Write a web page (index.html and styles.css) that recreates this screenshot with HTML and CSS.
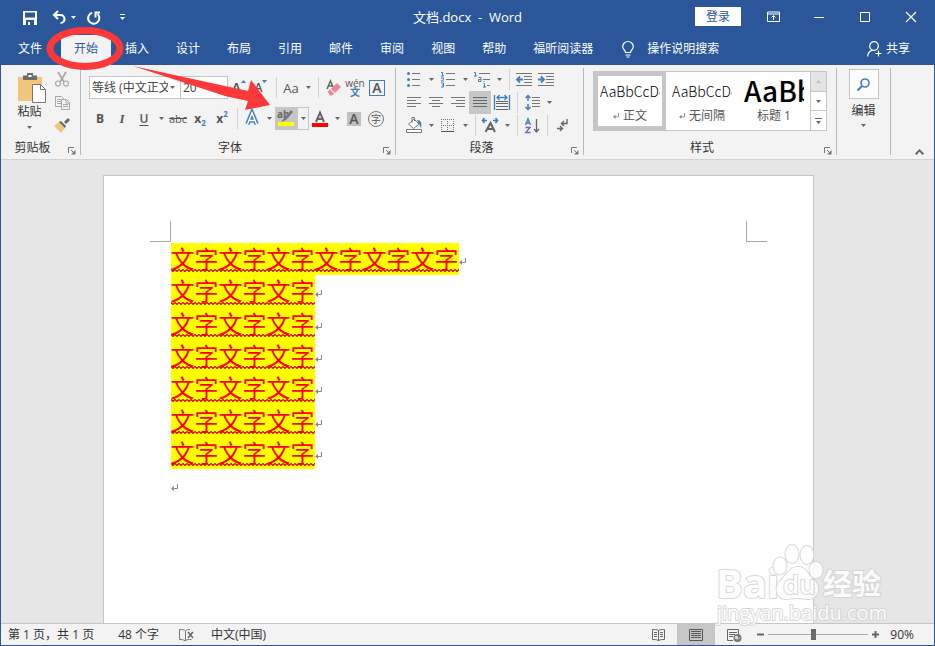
FILE: index.html
```html
<!DOCTYPE html>
<html lang="zh-CN">
<head>
<meta charset="utf-8">
<title>文档.docx - Word</title>
<link rel="stylesheet" href="styles.css">
</head>
<body>
<svg class="defs" aria-hidden="true">
  <symbol id="caret" viewBox="0 0 5 3"><path d="M0 0h5L2.500 3z" fill="currentColor"/></symbol>
  <symbol id="launcher" viewBox="0 0 8 8"><path d="M.5 6V.5H6M3 3l3 3" fill="none" stroke="#777"/><path d="M7.500 3v4.500H3z" fill="#777"/></symbol>
  <symbol id="mark" viewBox="0 0 7 7"><path d="M6.500 0v4.500H2" fill="none" stroke="#888"/><path d="M0 4.500L3 2v5z" fill="#888"/></symbol>
  <pattern id="zigzag" width="4" height="3" patternUnits="userSpaceOnUse"><path d="M-1 1.500L0 .5l2 2 2-2 1 1" fill="none" stroke="#d40000" stroke-width="1.200"/></pattern>
</svg>
<div class="window">
  <header class="titlebar">
    <div class="quick">
      <button class="q-save" aria-label="保存"><svg width="14" height="14" viewBox="0 0 14 14"><path fill-rule="evenodd" d="M0 0h14v14H0zM2 1.500v5h10v-5zM3 9v5h2v-3h2v3h4V9z" fill="#fff"/></svg></button>
      <button class="q-undo" aria-label="撤消"><svg width="15" height="13" viewBox="0 0 15 13"><path d="M2 4h6.500a4 4 0 0 1 0 8M6 0L2 4l4 4" fill="none" stroke="#fff" stroke-width="2.200"/></svg><svg class="caret"><use href="#caret"/></svg></button>
      <button class="q-redo" aria-label="重复"><svg width="14" height="14" viewBox="0 0 14 14"><path d="M5 1.800A5.600 5.600 0 1 0 10.500 3M8.500 6.500V1.500H13" fill="none" stroke="#fff" stroke-width="2"/></svg></button>
      <button class="q-more" aria-label="自定义快速访问工具栏"><svg width="5" height="7" viewBox="0 0 5 7"><path d="M0 0h5v1H0zM0 3h5L2.500 6z" fill="#fff"/></svg></button>
    </div>
    <h1 class="title">文档.docx&nbsp; -&nbsp; Word</h1>
    <div class="win-controls">
      <button class="login">登录</button>
      <button class="win" aria-label="功能区显示选项"><svg width="13" height="11" viewBox="0 0 13 11"><path d="M.5 1h12v9.500H.5zM.5 3h12M6.500 9V5M4.500 6.500l2-2 2 2" fill="none" stroke="#fff"/></svg></button>
      <button class="win" aria-label="最小化"><svg width="10" height="10" viewBox="0 0 10 10"><path d="M0 5.500h10" stroke="#fff"/></svg></button>
      <button class="win" aria-label="最大化"><svg width="10" height="10" viewBox="0 0 10 10"><path d="M.5.5h9v9h-9z" fill="none" stroke="#fff"/></svg></button>
      <button class="win" aria-label="关闭"><svg width="10" height="10" viewBox="0 0 10 10"><path d="M0 0l10 10M10 0L0 10" stroke="#fff" stroke-width="1.200"/></svg></button>
    </div>
  </header>
  <nav class="tabs">
    <button class="tab file">文件</button><button class="tab active">开始</button><button class="tab">插入</button><button class="tab">设计</button><button class="tab">布局</button><button class="tab">引用</button><button class="tab">邮件</button><button class="tab">审阅</button><button class="tab">视图</button><button class="tab">帮助</button><button class="tab">福昕阅读器</button>
    <button class="tell"><svg width="12" height="17" viewBox="0 0 12 17"><path d="M3.500 11.500C3.500 9 .7 8.500.7 5.500a5.300 5 0 0 1 10.600 0c0 3-2.800 3.500-2.800 6zM3.500 14h5M4.500 16h3" fill="none" stroke="#fff" stroke-width="1.200"/></svg>操作说明搜索</button>
    <button class="share"><svg width="15" height="16" viewBox="0 0 15 16"><circle cx="7" cy="5" r="4.300" fill="none" stroke="#fff" stroke-width="1.200"/><path d="M.6 15.500c.3-3.500 2-5.500 5-6.300M8.500 12.500h6M11.500 9.500v6" fill="none" stroke="#fff" stroke-width="1.200"/></svg>共享</button>
  </nav>

  <section class="ribbon">
    <div class="group clipboard">
      <div class="clip-body">
        <button class="paste"><svg width="28" height="30" viewBox="0 0 28 30"><path d="M0 4h24v24H0z" fill="#eec67c"/><path d="M5 2.500h4V0h6v2.500h4V7H5z" fill="#6d6d6d"/><path d="M10.500 2h3v2h-3z" fill="#fff"/><path d="M14.500 11.500h8l5 5v13h-13z" fill="#fff" stroke="#777"/><path d="M22.500 11.500v5h5" fill="none" stroke="#777"/></svg><span>粘贴</span><svg class="caret"><use href="#caret"/></svg></button>
        <div class="clip-side">
          <button class="btn" aria-label="剪切"><svg width="14" height="15" viewBox="0 0 14 15"><path d="M3 0l6 10M11 0L5 10" stroke="#a9a9a9" stroke-width="1.800"/><g fill="none" stroke="#a9a9a9" stroke-width="1.200"><circle cx="3" cy="11.500" r="2.500"/><circle cx="11" cy="11.500" r="2.500"/></g></svg></button>
          <button class="btn" aria-label="复制"><svg width="15" height="14" viewBox="0 0 15 14"><g fill="#f3f3f3" stroke="#a9a9a9"><path d="M.5.5h6l2 2v8h-8zM2 3.500h4M2 5.500h4M2 7.500h4"/><path d="M6.500 3.500h5l3 3v7h-8z"/><path d="M11 3.500v3.500h3M8 8.500h5M8 10.500h5"/></g></svg></button>
          <button class="btn" aria-label="格式刷"><svg width="16" height="15" viewBox="0 0 16 15"><path d="M0 8l5-4 6 6-4 5z" fill="#eec67c"/><path d="M5 4l2-1 5 5-1 2zM10 4l4-4 2 2-4 4z" fill="#666"/></svg></button>
        </div>
      </div>
      <footer class="group-foot"><span>剪贴板</span><button aria-label="剪贴板选项"><svg width="8" height="8"><use href="#launcher"/></svg></button></footer>
    </div>

    <div class="group font">
      <div class="font-body">
        <div class="row">
          <label class="combo face"><select aria-label="字体"><option>等线 (中文正文)</option></select><svg class="caret"><use href="#caret"/></svg></label>
          <label class="combo size"><select aria-label="字号"><option>20</option></select><svg class="caret"><use href="#caret"/></svg></label>
          <button class="btn grow" aria-label="增大字号">A<svg width="5" height="3" viewBox="0 0 5 3"><path d="M0 3h5L2.500 0z" fill="#3f7fb8"/></svg></button>
          <button class="btn shrink" aria-label="减小字号">A<svg width="5" height="3" viewBox="0 0 5 3"><path d="M0 0h5L2.500 3z" fill="#3f7fb8"/></svg></button>
          <i class="sep"></i>
          <button class="btn case" aria-label="更改大小写">Aa</button><button class="drop" aria-label="大小写选项"><svg class="caret"><use href="#caret"/></svg></button>
          <i class="sep"></i>
          <button class="btn" aria-label="清除格式"><svg width="15" height="16" viewBox="0 0 15 16"><path d="M1 9l3.500-8L7 7M2.500 6H6" fill="none" stroke="#666" stroke-width="1.500"/><path d="M5 9l6-6 4 4-6 6z" fill="#e58a9d"/><path d="M1.500 11.500L4 9.500l4 4L6 15.500H4z" fill="#e58a9d"/></svg></button>
          <button class="btn phonetic" aria-label="拼音指南"><span>wén</span><b>文</b></button>
          <button class="btn" aria-label="字符边框"><span class="boxed">A</span></button>
        </div>
        <div class="row">
          <button class="btn bold">B</button><button class="btn italic">I</button><button class="btn under">U</button><button class="drop" aria-label="下划线选项"><svg class="caret"><use href="#caret"/></svg></button>
          <button class="btn strike">abc</button><button class="btn script">x<sub>2</sub></button><button class="btn script">x<sup>2</sup></button>
          <i class="sep"></i>
          <button class="btn" aria-label="文本效果"><svg width="14" height="15" viewBox="0 0 14 15"><path d="M2.500 13L7 2l4.500 11M4.500 9.500h5" fill="none" stroke="#8fb4dc" stroke-width="5"/><path d="M2.500 13L7 2l4.500 11M4.500 9.500h5" fill="none" stroke="#3c78b4" stroke-width="3.600"/><path d="M2.500 13L7 2l4.500 11M4.500 9.500h5" fill="none" stroke="#fff" stroke-width="1.500"/></svg></button><button class="drop" aria-label="效果选项"><svg class="caret"><use href="#caret"/></svg></button>
          <button class="btn picked" aria-label="突出显示"><svg width="18" height="17" viewBox="0 0 18 17"><text x="0" y="8" class="ab">ab</text><path d="M14 0l2 2-7 8-2-2zM7 8l2 2-5 2z" fill="#777"/><path d="M1 12h16v4H1z" fill="#ff0"/></svg></button><button class="drop outlined" aria-label="突出显示颜色"><svg class="caret"><use href="#caret"/></svg></button>
          <button class="btn" aria-label="字体颜色"><svg width="16" height="16" viewBox="0 0 16 16"><path d="M4 11L8 1.500 12 11M5.500 8h5" fill="none" stroke="#666" stroke-width="2"/><path d="M0 12h16v4H0z" fill="#f00"/></svg></button><button class="drop" aria-label="字体颜色选项"><svg class="caret"><use href="#caret"/></svg></button>
          <button class="btn" aria-label="字符底纹"><span class="shaded">A</span></button>
          <button class="btn" aria-label="带圈字符"><span class="circled">字</span></button>
        </div>
      </div>
      <footer class="group-foot"><span>字体</span><button aria-label="字体选项"><svg width="8" height="8"><use href="#launcher"/></svg></button></footer>
    </div>

    <div class="group para">
      <div class="para-body">
        <div class="row">
          <button class="btn" aria-label="项目符号"><svg width="14" height="15" viewBox="0 0 14 15"><path d="M5 1.500h8M5 7.500h8M5 13.500h8" stroke="#777"/><g fill="#3f7fb8"><circle cx="1.500" cy="1.500" r="1.500"/><circle cx="1.500" cy="7.500" r="1.500"/><circle cx="1.500" cy="13.500" r="1.500"/></g></svg></button><button class="drop" aria-label="项目符号选项"><svg class="caret"><use href="#caret"/></svg></button>
          <button class="btn" aria-label="编号"><svg width="14" height="15" viewBox="0 0 14 15"><path d="M5 1.500h9M5 7.500h9M5 13.500h9" stroke="#777"/><path d="M0 .5h1.500V4M0 4h3M0 6h2.500v1.500L.5 9H3M0 11h2.500v4H0M1 13h1.500" fill="none" stroke="#3f7fb8"/></svg></button><button class="drop" aria-label="编号选项"><svg class="caret"><use href="#caret"/></svg></button>
          <button class="btn" aria-label="多级列表"><svg width="16" height="15" viewBox="0 0 16 15"><path d="M5 1.500h11M9 7.500h7M13 13.500h3" stroke="#777"/><path d="M0 .5h1.500V4M0 4h3M4.500 5.500H7v4H4.500v-2H7M9.500 11.500h1v4M10 9v1M9 15h3" fill="none" stroke="#3f7fb8"/></svg></button><button class="drop" aria-label="多级列表选项"><svg class="caret"><use href="#caret"/></svg></button>
          <i class="sep"></i>
          <button class="btn" aria-label="减少缩进量"><svg width="16" height="13" viewBox="0 0 16 13"><path d="M0 .5h16M8 3.500h8M8 6.500h8M8 9.500h8M0 12.500h16" stroke="#777"/><path d="M7 6.500H1M4 3.500l-3 3 3 3" fill="none" stroke="#3f7fb8" stroke-width="1.800"/></svg></button>
          <button class="btn" aria-label="增加缩进量"><svg width="16" height="13" viewBox="0 0 16 13"><path d="M0 .5h16M8 3.500h8M8 6.500h8M8 9.500h8M0 12.500h16" stroke="#777"/><path d="M0 6.500h6M3 3.500l3 3-3 3" fill="none" stroke="#3f7fb8" stroke-width="1.800"/></svg></button>
        </div>
        <div class="row">
          <button class="btn" aria-label="左对齐"><svg width="14" height="11" viewBox="0 0 14 11"><path d="M0 .5h14M0 3.500h9M0 6.500h14M0 9.500h9" stroke="#777"/></svg></button>
          <button class="btn" aria-label="居中"><svg width="14" height="11" viewBox="0 0 14 11"><path d="M0 .5h14M3 3.500h8M0 6.500h14M3 9.500h8" stroke="#777"/></svg></button>
          <button class="btn" aria-label="右对齐"><svg width="14" height="11" viewBox="0 0 14 11"><path d="M0 .5h14M5 3.500h9M0 6.500h14M5 9.500h9" stroke="#777"/></svg></button>
          <button class="btn picked" aria-label="两端对齐"><svg width="14" height="11" viewBox="0 0 14 11"><path d="M0 .5h14M0 3.500h14M0 6.500h14M0 9.500h14" stroke="#666"/></svg></button>
          <button class="btn" aria-label="分散对齐"><svg width="16" height="15" viewBox="0 0 16 15"><path d="M2 6.500h12M2 8.500h12M2 11.500h12M2 14.500h12" stroke="#666"/><path d="M.5 0v15M15.500 0v15M3 2.500h10M5.500 0L3 2.500 5.500 5M10.500 0L13 2.500 10.500 5" fill="none" stroke="#3f7fb8" stroke-width="1.300"/></svg></button>
          <i class="sep"></i>
          <button class="btn" aria-label="行和段落间距"><svg width="15" height="15" viewBox="0 0 15 15"><path d="M7 2.500h8M7 5.500h8M7 8.500h8M7 11.500h8" stroke="#777"/><path d="M3 0v6M.5 3L3 .5 5.500 3M3 9v6M.5 12L3 14.500 5.500 12" fill="none" stroke="#3f7fb8" stroke-width="1.500"/></svg></button><button class="drop" aria-label="间距选项"><svg class="caret"><use href="#caret"/></svg></button>
        </div>
        <div class="row">
          <button class="btn" aria-label="底纹"><svg width="16" height="17" viewBox="0 0 16 17"><path d="M2.500 7L8 2l5 5-5.500 4.500zM6 6V.5h2.500V4" fill="#fff" stroke="#777"/><path d="M11 3c4 0 5 3 4 8l-2-4z" fill="#3f7fb8"/><path d="M.5 12.500h15v3H.5z" fill="#fff" stroke="#777"/></svg></button><button class="drop" aria-label="底纹选项"><svg class="caret"><use href="#caret"/></svg></button>
          <button class="btn" aria-label="边框"><svg width="14" height="13" viewBox="0 0 14 13"><path d="M0 .5h13M0 6.500h13M.5 0v13M6.500 0v13M12.500 0v13" stroke="#777" stroke-dasharray="1 1"/><path d="M0 12.500h13" stroke="#555"/></svg></button><button class="drop" aria-label="边框选项"><svg class="caret"><use href="#caret"/></svg></button>
          <i class="sep"></i>
          <button class="btn" aria-label="中文版式"><svg width="16" height="15" viewBox="0 0 16 15"><path d="M3.500 14L8.500 5l4.500 9M5 11h7" fill="none" stroke="#666" stroke-width="2"/><path d="M0 2.500h5M2.500 0L.5 2.500l2 2.500M11 2.500h5M13.500 0l2 2.500-2 2.500" fill="none" stroke="#3f7fb8" stroke-width="1.600"/></svg></button><button class="drop" aria-label="中文版式选项"><svg class="caret"><use href="#caret"/></svg></button>
          <i class="sep"></i>
          <button class="btn" aria-label="排序"><svg width="14" height="15" viewBox="0 0 14 15"><path d="M.5 7L3 .8 5.500 7M1.500 5h3" fill="none" stroke="#3f7fb8" stroke-width="1.300"/><path d="M.5 9.500H5L.8 14.500h4.700" fill="none" stroke="#8b5ba8" stroke-width="1.300"/><path d="M11.500 1v13M9 11l2.500 3 2.500-3" fill="none" stroke="#666" stroke-width="1.300"/></svg></button>
          <i class="sep"></i>
          <button class="btn" aria-label="显示编辑标记"><svg width="10" height="13" viewBox="0 0 10 13"><path d="M10 0v4.500H5M7 2L4.500 4.500 7 7M0 9.500h5M3 7l2.500 2.500L3 12" fill="none" stroke="#666" stroke-width="1.400"/></svg></button>
        </div>
      </div>
      <footer class="group-foot"><span>段落</span><button aria-label="段落选项"><svg width="8" height="8"><use href="#launcher"/></svg></button></footer>
    </div>

    <div class="group styles">
      <div class="gallery">
        <button class="style chosen"><span class="sample">AaBbCcDd</span><span class="name"><svg width="6" height="6"><use href="#mark"/></svg>正文</span></button>
        <button class="style"><span class="sample">AaBbCcDd</span><span class="name"><svg width="6" height="6"><use href="#mark"/></svg>无间隔</span></button>
        <button class="style"><span class="sample heading">AaBb</span><span class="name">标题 1</span></button>
        <div class="scroll">
          <button class="off" aria-label="上一行"><svg width="5" height="3" viewBox="0 0 5 3"><path d="M0 3h5L2.500 0z" fill="#bbb"/></svg></button>
          <button aria-label="下一行"><svg class="caret"><use href="#caret"/></svg></button>
          <button aria-label="其他样式"><svg width="7" height="6" viewBox="0 0 7 6"><path d="M0 0h7v1H0zM1 3h5L3.500 6z" fill="#666"/></svg></button>
        </div>
      </div>
      <footer class="group-foot"><span>样式</span><button aria-label="样式选项"><svg width="8" height="8"><use href="#launcher"/></svg></button></footer>
    </div>

    <div class="group editing">
      <button class="edit"><span class="edit-icon"><svg width="13" height="13" viewBox="0 0 13 13"><circle cx="8" cy="5" r="4" fill="none" stroke="#3f7fb8" stroke-width="1.600"/><path d="M5 8l-4.500 4.500" stroke="#3f7fb8" stroke-width="2"/></svg></span><span>编辑</span><svg class="caret"><use href="#caret"/></svg></button>
    </div>
    <button class="collapse" aria-label="折叠功能区"><svg width="9" height="6" viewBox="0 0 9 6"><path d="M.7 5.200L4.500 1.400l3.800 3.800" fill="none" stroke="#666" stroke-width="2"/></svg></button>
  </section>

  <main class="workspace">
    <article class="page">
      <div class="margins"><i class="corner left"></i><i class="corner right"></i></div>
      <div class="text">
        <p><mark>文字文字文字文字文字文字<svg class="wave"><rect width="100%" height="3" fill="url(#zigzag)"/></svg></mark><svg class="ret"><use href="#mark"/></svg></p>
        <p><mark>文字文字文字<svg class="wave"><rect width="100%" height="3" fill="url(#zigzag)"/></svg></mark><svg class="ret"><use href="#mark"/></svg></p>
        <p><mark>文字文字文字<svg class="wave"><rect width="100%" height="3" fill="url(#zigzag)"/></svg></mark><svg class="ret"><use href="#mark"/></svg></p>
        <p><mark>文字文字文字<svg class="wave"><rect width="100%" height="3" fill="url(#zigzag)"/></svg></mark><svg class="ret"><use href="#mark"/></svg></p>
        <p><mark>文字文字文字<svg class="wave"><rect width="100%" height="3" fill="url(#zigzag)"/></svg></mark><svg class="ret"><use href="#mark"/></svg></p>
        <p><mark>文字文字文字<svg class="wave"><rect width="100%" height="3" fill="url(#zigzag)"/></svg></mark><svg class="ret"><use href="#mark"/></svg></p>
        <p><mark>文字文字文字<svg class="wave"><rect width="100%" height="3" fill="url(#zigzag)"/></svg></mark><svg class="ret"><use href="#mark"/></svg></p>
        <p><svg class="ret"><use href="#mark"/></svg></p>
      </div>
    </article>
  </main>

  <footer class="status">
    <span class="pages">第 1 页，共 1 页</span><span class="words">48 个字</span>
    <button class="proof" aria-label="校对"><svg width="15" height="12" viewBox="0 0 15 12"><path d="M6.500 11.500V2C5 .5 3 .5.5.5v10c2 0 4 0 6 1.500zM6.500 2C8 .5 9.500.5 11 .5M6.500 11.500c1.500-1 3-1 6-1" fill="none" stroke="#777"/><path d="M9 3l5 6M14 3L9 9" stroke="#666" stroke-width="1.500"/></svg></button>
    <span>中文(中国)</span>
    <div class="views">
      <button class="view" aria-label="阅读视图"><svg width="13" height="12" viewBox="0 0 13 12"><path d="M6.500 12V1.500C5 .5 3 .5.500.5v10c2 0 4 0 6 1 2-1 4-1 6-1V.5c-2.500 0-4.500 0-6 1M2 3.500h3M2 5.500h3M2 7.500h3M8 3.500h3M8 5.500h3M8 7.500h3" fill="none" stroke="#666"/></svg></button>
      <button class="view on" aria-label="页面视图"><svg width="14" height="12" viewBox="0 0 14 12"><path d="M.5.5h13v11H.5zM2 2.500h10M2 4.500h10M2 6.500h10M2 8.500h10" fill="none" stroke="#555"/></svg></button>
      <button class="view" aria-label="Web 版式视图"><svg width="14" height="12" viewBox="0 0 14 12"><path d="M6 11.500H.5V.5h11V5M2 3.500h8M2 5.500h6M2 7.500h4" fill="none" stroke="#666"/><circle cx="10.500" cy="9" r="4" fill="#777"/><path d="M8 8l2-1 1 2-2 1zM11 10.500l2-2" stroke="#ddd" fill="#ddd"/></svg></button>
      <button class="zoom" aria-label="缩小"><svg width="7" height="7" viewBox="0 0 7 7"><path d="M0 3.500h7" stroke="#666" stroke-width="2"/></svg></button>
      <input class="slider" type="range" min="0" max="100" value="45" aria-label="缩放">
      <button class="zoom" aria-label="放大"><svg width="7" height="7" viewBox="0 0 7 7"><path d="M0 3.500h7M3.500 0v7" stroke="#666" stroke-width="2"/></svg></button>
      <span class="percent">90%</span>
    </div>
  </footer>

  <svg class="watermark" width="170" height="84" viewBox="0 0 170 84" aria-label="Baidu 经验">
    <g fill="#fff" stroke="#d2d2d2" stroke-width="2" paint-order="stroke" stroke-linejoin="round" opacity=".85">
      <text x="1" y="54" class="wm-logo">Bai</text>
      <ellipse cx="65" cy="22" rx="6.500" ry="8.500"/><ellipse cx="77" cy="10" rx="6.500" ry="9"/><ellipse cx="92" cy="11" rx="6.500" ry="9"/><ellipse cx="101" cy="26" rx="6.500" ry="8"/>
      <path d="M83 23c8 0 10 8 17 14 6 6 3 18-6 18-5 0-7-1-12-1s-7 1-11 1c-10 0-12-12-6-18 7-6 9-14 18-14z"/>
      <text x="68" y="50" class="wm-du">du</text>
      <text x="108" y="51" class="wm-cn">经验</text>
      <text x="2" y="76" class="wm-url">jingyan.baidu.com</text>
    </g>
  </svg>
  <svg class="annotation" width="280" height="120" viewBox="0 0 280 120" aria-hidden="true"><ellipse cx="85" cy="48.500" rx="35" ry="18" fill="none" stroke="#fc3838" stroke-width="7"/><path d="M133 66l115 25 3-11 19 25-25 5 3-9-23-5z" fill="#fc3838"/></svg>
</div>
</body>
</html>
```
FILE: styles.css
```css
* { box-sizing: border-box; }
body { margin: 0; font: 12px/16px "Open Sans", "Noto Sans CJK SC", sans-serif; color: #333; }
button { margin: 0; padding: 0; border: 0; background: none; color: inherit; font: inherit; display: flex; align-items: center; justify-content: center; flex: none; }
svg { flex: none; display: block; overflow: visible; }
.defs { position: absolute; width: 0; height: 0; }
.caret { width: 5px; height: 3px; color: #666; }
.window { position: relative; min-height: 100vh; display: flex; flex-direction: column; border: 1px solid #2b579a; border-top: 0; background: #e6e6e6; }

.titlebar { height: 33px; display: grid; grid-template-columns: 1fr auto 1fr; align-items: center; background: #2b579a; color: #fff; }
.titlebar .caret { color: #fff; }
.quick { display: flex; align-items: center; padding: 2px 0 0 22px; }
.q-undo { margin-left: 15px; gap: 4px; }
.q-redo { margin-left: 11px; }
.q-more { margin-left: 19px; }
.title { margin: 0; font-size: 13px; font-weight: 400; line-height: 16px; }
.win-controls { display: flex; justify-content: flex-end; align-items: center; }
.login { width: 46px; height: 19px; margin-right: 9px; background: #fff; color: #2b579a; }
.win { width: 46px; height: 32px; }

.tabs { height: 32px; display: flex; align-items: stretch; gap: 1px; padding: 0 24px 0 4px; background: #2b579a; color: #fff; }
.tab { padding: 0 13px; }
.tab.file { margin-right: 5px; }
.tab.active { margin-top: 2px; padding-bottom: 2px; background: #f3f3f3; color: #2b579a; }
.tell { margin-left: 15px; gap: 13px; }
.share { margin-left: auto; gap: 4px; }

.ribbon { display: flex; height: 95px; padding: 3px 0 4px; background: #f3f3f3; border-bottom: 1px solid #d2d2d2; }
.group { flex: none; display: flex; flex-direction: column; border-right: 1px solid #b8b8b8; }
.group-foot { display: flex; align-items: center; height: 14px; margin-top: auto; }
.group-foot span { flex: 1; text-align: center; }
.group-foot button { width: 16px; padding-top: 6px; }
.row { display: flex; align-items: center; height: 23px; }
.btn { width: 22px; height: 23px; color: #555; }
.drop { width: 12px; height: 23px; }
.sep { width: 8px; height: 21px; background: linear-gradient(#d0d0d0, #d0d0d0) center / 1px 100% no-repeat; }
.picked { background: #c6c6c6; }
.outlined { border: 1px solid #c6c6c6; }

.clipboard { width: 80px; }
.clip-body { display: flex; gap: 3px; padding-left: 15px; }
.paste { flex-direction: column; justify-content: flex-start; width: 32px; padding-top: 5px; }
.paste span { margin: 1px 5px 6px 0; }
.paste .caret { margin-right: 5px; }

.font { width: 315px; }
.font-body { display: flex; flex-direction: column; gap: 8px; padding: 8px 7px 0 8px; }
.combo { display: flex; align-items: center; height: 23px; padding-right: 5px; border: 1px solid #c6c6c6; background: #fff; }
.combo select { appearance: none; flex: 1; min-width: 0; padding: 0 2px; border: 0; background: none; color: #444; font: inherit; white-space: nowrap; overflow: hidden; }
.face { width: 92px; }
.size { width: 48px; margin-left: -1px; }
.grow, .shrink { align-items: flex-start; font-weight: 600; font-size: 14px; line-height: 23px; }
.shrink { font-size: 12px; }
.grow svg, .shrink svg { margin-top: 4px; }
.case { font-size: 13px; }
.phonetic { flex-direction: column; font-size: 10px; line-height: 9px; }
.phonetic b { color: #3f7fb8; line-height: 9px; }
.boxed, .shaded { display: block; width: 16px; height: 16px; border: 1px solid #3f7fb8; font-weight: 600; font-size: 14px; line-height: 14px; text-align: center; }
.shaded { width: 14px; height: 14px; border: 0; background: #c0c0c0; }
.circled { width: 16px; height: 16px; border: 1px solid #777; border-radius: 50%; font-size: 10px; line-height: 14px; text-align: center; }
.bold { font-weight: 700; }
.italic { font: italic 700 13px/16px "Liberation Serif", serif; }
.under { font-weight: 600; text-decoration: underline; text-underline-offset: 2px; }
.strike { font-size: 11px; text-decoration: line-through; }
.script { font-weight: 700; }
.script sub, .script sup { color: #3f7fb8; font-size: 8px; line-height: 8px; }
.script sub { align-self: flex-end; padding-bottom: 3px; }
.script sup { align-self: flex-start; padding-top: 3px; }
.ab { font: 700 10px "Open Sans", sans-serif; fill: #666; }

.para { width: 188px; }
.para-body { padding-left: 7px; }

.styles { width: 253px; }
.gallery { display: flex; width: 234px; height: 60px; margin: 3px 0 0 9px; border: 1px solid #c6c6c6; background: #fff; }
.style { width: 72px; flex-direction: column; padding: 0 6px; }
.style.chosen { border: 4px solid #c6c6c6; padding: 0 2px; }
.sample { width: 60px; height: 24px; overflow: hidden; white-space: nowrap; text-align: left; color: #000; font: 300 14px/24px "Noto Sans CJK SC", sans-serif; }
.heading { font-size: 28px; font-weight: 500; line-height: 22px; }
.name { display: flex; align-items: center; gap: 4px; margin-top: 5px; height: 16px; color: #555; }
.scroll { flex: 1; display: flex; flex-direction: column; border-left: 1px solid #c6c6c6; }
.scroll button { flex: 1; }
.scroll button + button { border-top: 1px solid #c6c6c6; }
.scroll .off { background: #e4e4e4; }

.editing { width: 54px; align-items: center; padding-top: 1px; }
.edit { flex-direction: column; }
.edit-icon { display: flex; align-items: center; justify-content: center; width: 30px; height: 30px; margin-bottom: 4px; border: 1px solid #c6c6c6; background: #fcfcfc; }
.edit .caret { margin-top: 5px; }
.collapse { align-self: flex-end; margin: 0 10px 0 auto; }

.workspace { flex: 1; display: flex; padding: 15px 19px 0 0; }
.page { flex: 1; max-width: 711px; margin: 0 auto; padding: 45px 46px 0; border: 1px solid #c6c6c6; border-bottom: 0; background: #fff; }
.margins { display: flex; justify-content: space-between; }
.corner { width: 21px; height: 21px; border-bottom: 1px solid #aaa; }
.corner.left { border-right: 1px solid #aaa; }
.corner.right { border-left: 1px solid #aaa; }
.text { padding: 1px 0 0 21px; }
.text p { display: flex; align-items: stretch; height: 32px; margin: 0; }
.text p:nth-child(3n+2) { height: 33px; }
.text mark { position: relative; background: #ff0; color: #f00; font: 400 24px/30px "Noto Sans CJK SC", sans-serif; }
.wave { position: absolute; left: 0; bottom: 3px; width: 100%; height: 3px; }
.ret { width: 7px; height: 7px; margin-top: 15px; }

.status { display: flex; align-items: center; height: 22px; padding-left: 7px; background: #f3f3f3; border-top: 1px solid #c6c6c6; }
.words { margin-left: 24px; }
.proof { margin: 0 17px 0 20px; }
.views { display: flex; align-items: center; align-self: stretch; margin-left: auto; padding-right: 20px; }
.view { width: 38px; align-self: stretch; }
.view.on { background: #c6c6c6; }
.zoom { width: 15px; height: 21px; }
.slider { appearance: none; width: 100px; height: 11px; margin: 0; background: linear-gradient(#aaa, #aaa) center / 100% 1px no-repeat; }
.slider::-webkit-slider-thumb { appearance: none; width: 5px; height: 11px; border: 0; background: #6b6b6b; }
.percent { margin-left: 7px; }

.watermark { position: absolute; right: 49px; bottom: 17px; pointer-events: none; }
.wm-logo { font: 700 40px "Open Sans", sans-serif; }
.wm-du { font: 600 26px "Open Sans", sans-serif; }
.wm-cn { font: 700 29px "Noto Sans CJK SC", sans-serif; }
.wm-url { font: 400 20px "Open Sans", sans-serif; }
.annotation { position: absolute; left: -1px; top: 0; pointer-events: none; }
```
